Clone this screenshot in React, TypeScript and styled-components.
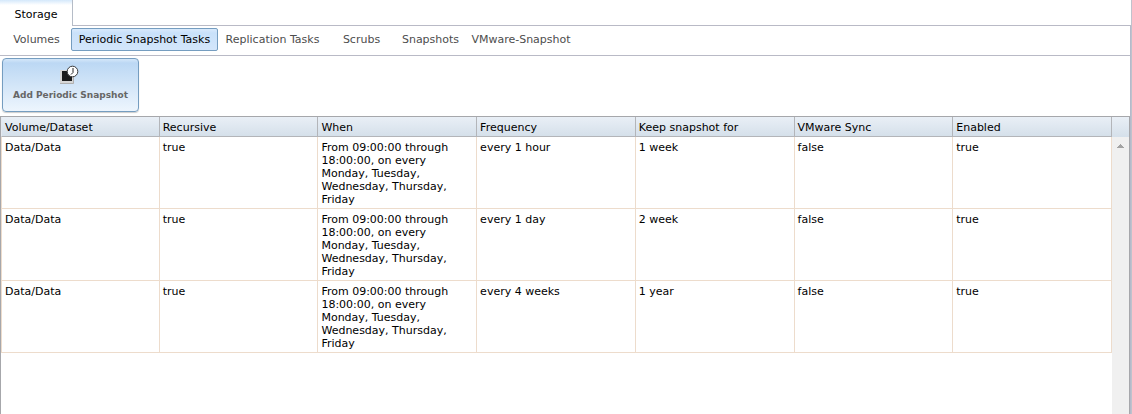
import React from "react";
import styled, { createGlobalStyle, css } from "styled-components";

const GlobalStyle = createGlobalStyle`
  *, *::before, *::after { box-sizing: border-box; }
  body {
    margin: 0;
    background: #fff;
    color: #000;
    font: 11px/13px Verdana, "DejaVu Sans", sans-serif;
  }
`;

const Page = styled.div`
  display: flex;
  flex-direction: column;
  min-height: 100vh;
  border-right: 1px solid #c0c2cc;
`;

const TopTabs = styled.div`
  display: flex;
  height: 26px;
`;

const TopTab = styled.button`
  width: 73px;
  padding: 3px 0 0;
  border: 0;
  border-right: 1px solid #b5bcc7;
  background: linear-gradient(#d4e8fb, #fff 5px);
  color: #000;
  font: inherit;
`;

const TopTabsRest = styled.div`
  flex: 1;
  border-bottom: 1px solid #b9bac6;
`;

const Content = styled.div`
  display: flex;
  flex: 1;
  flex-direction: column;
  border-right: 1px solid #b5bacb;
`;

const SubTabs = styled.nav`
  display: flex;
  height: 30px;
  padding: 2px 0 0 2px;
  border-bottom: 1px solid #b9bac6;
`;

const SubTab = styled.button<{ $width: number; $selected?: boolean }>`
  width: ${(p) => p.$width}px;
  height: 23px;
  padding: 0;
  border: 1px solid transparent;
  border-radius: 2px;
  background: none;
  color: #4d4d4d;
  font: inherit;
  white-space: nowrap;
  ${(p) =>
    p.$selected &&
    css`
      border-color: #759dc0;
      background: linear-gradient(#d9eafc, #c9e1fa 4px, #d3e6fb);
      color: #000;
    `}
`;

const Toolbar = styled.div`
  padding: 2px 2px 4px;
`;

const AddButton = styled.button`
  display: flex;
  flex-direction: column;
  align-items: center;
  gap: 4px;
  width: 137px;
  height: 54px;
  padding: 0 0 4px;
  justify-content: center;
  border: 1px solid #759dc0;
  border-radius: 4px;
  background: linear-gradient(#d5e7f9, #bcd8f4 4px, #edf5fd);
  box-shadow: 0 1px 1px rgba(0, 0, 0, 0.2);
  color: #666;
  font: bold 9px/13px Verdana, "DejaVu Sans", sans-serif;
  white-space: nowrap;
`;

const GridPanel = styled.div`
  display: flex;
  flex: 1;
  align-items: stretch;
  border: 1px solid #a6a7ab;
  border-bottom: 0;
`;

const GridBody = styled.div`
  flex: 1;
`;

const headerFill = css`
  height: 20px;
  background: linear-gradient(#e9eff6, #d5e0ea);
`;

const Table = styled.table`
  width: 100%;
  table-layout: fixed;
  border-collapse: separate;
  border-spacing: 0;
`;

const HeadCell = styled.th`
  ${headerFill}
  padding: 1px 3px 0;
  border-right: 1px solid #b3b5b9;
  border-bottom: 1px solid #b3b5b9;
  font-weight: normal;
  text-align: left;
  &:first-child { border-left: 1px solid #e4e9f0; }
`;

const Cell = styled.td`
  padding: 4px 3px 2px;
  border-right: 1px solid #eddccc;
  border-bottom: 1px solid #eddccc;
  vertical-align: top;
  &:first-child { border-left: 1px solid #eddccc; }
`;

const ScrollColumn = styled.div`
  display: flex;
  flex-direction: column;
  width: 17px;
  background: #f0f0f0;
`;

const ScrollCorner = styled.div`
  ${headerFill}
`;

const ScrollUp = styled.button`
  display: flex;
  align-items: center;
  justify-content: center;
  height: 18px;
  padding: 0;
  border: 0;
  background: none;
`;

const subTabs = [
  { label: "Volumes", width: 69 },
  { label: "Periodic Snapshot Tasks", width: 147, selected: true },
  { label: "Replication Tasks", width: 109 },
  { label: "Scrubs", width: 69 },
  { label: "Snapshots", width: 69 },
  { label: "VMware-Snapshot", width: 112 },
];

const columns = ["Volume/Dataset", "Recursive", "When", "Frequency", "Keep snapshot for", "VMware Sync", "Enabled"];
const when = "From 09:00:00 through 18:00:00, on every Monday, Tuesday, Wednesday, Thursday, Friday";
const rows = [
  ["Data/Data", "true", when, "every 1 hour", "1 week", "false", "true"],
  ["Data/Data", "true", when, "every 1 day", "2 week", "false", "true"],
  ["Data/Data", "true", when, "every 4 weeks", "1 year", "false", "true"],
];

const SnapshotIcon = () => (
  <svg width="21" height="20" viewBox="0 0 21 20" aria-hidden="true">
    <path d="M0 5h14v14H0z" fill="#d6d6d6" />
    <path d="M0 18.5h13.500V6" fill="none" stroke="#b0b0b0" />
    <path d="M2 6h10v10H2z" fill="#1c1c1c" />
    <circle cx="12.5" cy="6.5" r="5.3" fill="#fff" stroke="#3a3a3a" />
    <path d="M13 3v4.500L11 9.500" fill="none" stroke="#222" />
  </svg>
);

export default function App() {
  return (
    <Page>
      <GlobalStyle />
      <TopTabs>
        <TopTab type="button">Storage</TopTab>
        <TopTabsRest />
      </TopTabs>
      <Content>
        <SubTabs>
          {subTabs.map((t) => (
            <SubTab key={t.label} type="button" $width={t.width} $selected={t.selected}>
              {t.label}
            </SubTab>
          ))}
        </SubTabs>
        <Toolbar>
          <AddButton type="button">
            <SnapshotIcon />
            Add Periodic Snapshot
          </AddButton>
        </Toolbar>
        <GridPanel>
          <GridBody>
            <Table>
              <thead>
                <tr>
                  {columns.map((c) => (
                    <HeadCell key={c} scope="col">{c}</HeadCell>
                  ))}
                </tr>
              </thead>
              <tbody>
                {rows.map((r, i) => (
                  <tr key={i}>
                    {r.map((v, j) => (
                      <Cell key={j}>{v}</Cell>
                    ))}
                  </tr>
                ))}
              </tbody>
            </Table>
          </GridBody>
          <ScrollColumn>
            <ScrollCorner />
            <ScrollUp type="button" aria-label="Scroll up">
              <svg width="7" height="4" viewBox="0 0 7 4" shapeRendering="crispEdges" aria-hidden="true">
                <path d="M3 0h1v1h1v1h1v1h1v1H0V3h1V2h1V1h1z" fill="#a3a3a3" />
              </svg>
            </ScrollUp>
          </ScrollColumn>
        </GridPanel>
      </Content>
    </Page>
  );
}
